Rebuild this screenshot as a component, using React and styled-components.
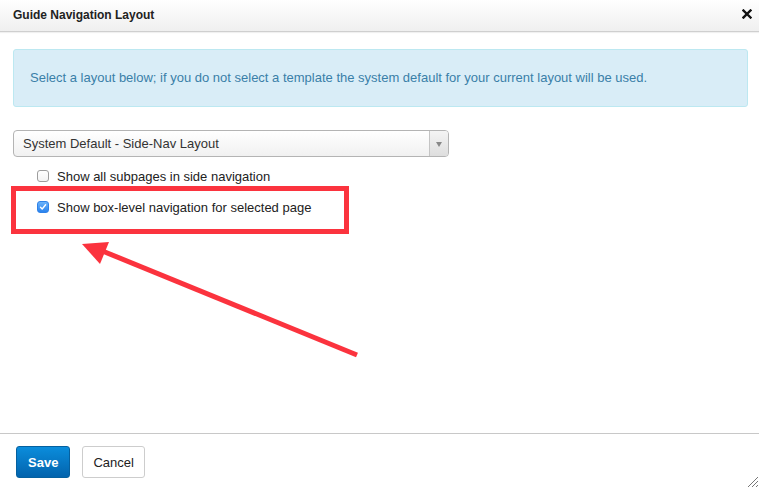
import React from "react";
import styled, { createGlobalStyle } from "styled-components";

const Global = createGlobalStyle`
  html, body { margin: 0; padding: 0; background: #fff; }
  body { font-family: "Liberation Sans", Arial, sans-serif; }
  * { box-sizing: border-box; }
`;

const Dialog = styled.div`
  position: relative;
  width: 759px;
  height: 488px;
  display: flex;
  flex-direction: column;
  background: #fff;
  overflow: hidden;
`;

const Header = styled.div`
  height: 32px;
  flex: none;
  display: flex;
  align-items: center;
  justify-content: space-between;
  padding: 0 7px 0 13px;
  background: linear-gradient(#ffffff, #efefef);
  border-bottom: 1px solid #cfcfcf;
  box-shadow: 0 1px 1px rgba(0,0,0,0.06);
`;

const Title = styled.h3`
  margin: 0;
  font-size: 12px;
  font-weight: bold;
  color: #222;
  line-height: 1;
  padding-bottom: 2px;
`;

const Close = styled.span`
  display: flex;
  width: 10px;
  height: 10px;
  margin-bottom: 4px;
`;

const Body = styled.div`
  flex: 1;
  padding: 17px 11px 0 13px;
  display: flex;
  flex-direction: column;
`;

const Alert = styled.div`
  height: 58px;
  display: flex;
  align-items: center;
  padding: 0 16px 2px 16px;
  background: #d9edf7;
  border: 1px solid #bce8f1;
  border-radius: 3px;
  color: #3a7fa8;
  font-size: 13px;
`;

const Select = styled.div`
  margin-top: 23px;
  width: 436px;
  height: 27px;
  display: flex;
  border: 1px solid #b4b4b4;
  border-radius: 4px;
  background: linear-gradient(#ffffff, #f1f1f1);
  overflow: hidden;
`;

const SelectValue = styled.div`
  flex: 1;
  display: flex;
  align-items: center;
  padding-left: 9px;
  font-size: 13px;
  color: #333;
`;

const SelectArrow = styled.div`
  width: 19px;
  display: flex;
  align-items: center;
  justify-content: center;
  border-left: 1px solid #c4c4c4;
  background: linear-gradient(#f4f4f4, #dedede);
  &::after {
    content: "";
    border-left: 3.5px solid transparent;
    border-right: 3.5px solid transparent;
    border-top: 5px solid #888;
    margin-top: 1px;
  }
`;

const Options = styled.div`
  display: flex;
  flex-direction: column;
  gap: 17px;
  padding: 12px 0 0 24px;
`;

const Option = styled.label`
  display: flex;
  align-items: center;
  gap: 8px;
  font-size: 13px;
  color: #222;
  height: 14px;
`;

const Box = styled.span`
  width: 12px;
  height: 12px;
  flex: none;
  display: flex;
  align-items: center;
  justify-content: center;
  border-radius: 3px;
  border: 1px solid ${(p) => (p.$checked ? "#2f82e8" : "#9d9d9d")};
  background: ${(p) =>
    p.$checked ? "linear-gradient(#6cb3fa, #2a83ee)" : "linear-gradient(#fff, #f3f3f3)"};
`;

const Footer = styled.div`
  height: 55px;
  flex: none;
  display: flex;
  align-items: center;
  gap: 12px;
  padding: 0 0 0 16px;
  border-top: 1px solid #c8c8c8;
`;

const Button = styled.button`
  height: 32px;
  padding: 0 ${(p) => (p.$primary ? "11px" : "10px")};
  border-radius: 3px;
  font-family: "Liberation Sans", Arial, sans-serif;
  font-size: 13px;
  margin-top: 2px;
  cursor: pointer;
  ${(p) =>
    p.$primary
      ? `
    color: #fff;
    font-weight: bold;
    background: linear-gradient(#0b8ddc, #0263ad);
    border: 1px solid #05609f;
  `
      : `
    color: #222;
    background: #fff;
    border: 1px solid #cdcdcd;
  `}
`;

const Grip = styled.svg`
  position: absolute;
  right: 0;
  bottom: 0;
`;

const Highlight = styled.div`
  position: absolute;
  left: 11px;
  top: 186px;
  width: 338px;
  height: 48px;
  border: 5px solid #fb333e;
  pointer-events: none;
`;

const Arrow = styled.svg`
  position: absolute;
  left: 0;
  top: 0;
  pointer-events: none;
`;

function Check() {
  return (
    <svg width="8" height="8" viewBox="0 0 8 8">
      <path d="M1.5 4.3 L3.2 6 L6.6 1.8" fill="none" stroke="#fff" strokeWidth="1.4" strokeLinecap="round" strokeLinejoin="round" />
    </svg>
  );
}

export default function App() {
  return (
    <>
      <Global />
      <Dialog>
        <Header>
          <Title>Guide Navigation Layout</Title>
          <Close>
            <svg width="10" height="10" viewBox="0 0 10 10">
              <path d="M1.5 1.5 L8.5 8.5 M8.5 1.5 L1.5 8.5" stroke="#111" strokeWidth="2.4" strokeLinecap="square" />
            </svg>
          </Close>
        </Header>
        <Body>
          <Alert>
            Select a layout below; if you do not select a template the system default for your current layout will be used.
          </Alert>
          <Select>
            <SelectValue>System Default - Side-Nav Layout</SelectValue>
            <SelectArrow />
          </Select>
          <Options>
            <Option>
              <Box />
              Show all subpages in side navigation
            </Option>
            <Option>
              <Box $checked>
                <Check />
              </Box>
              Show box-level navigation for selected page
            </Option>
          </Options>
        </Body>
        <Footer>
          <Button $primary>Save</Button>
          <Button>Cancel</Button>
        </Footer>
        <Grip width="14" height="14" viewBox="0 0 14 14">
          <path d="M13 3 L3 13 M13 7 L7 13 M13 11 L11 13" stroke="#777" strokeWidth="1" />
        </Grip>
        <Highlight />
        <Arrow width="759" height="488">
          <line x1="357" y1="355" x2="100" y2="250" stroke="#fb333e" strokeWidth="5" />
          <polygon points="82,244 109,242 100,264" fill="#fb333e" />
        </Arrow>
      </Dialog>
    </>
  );
}
